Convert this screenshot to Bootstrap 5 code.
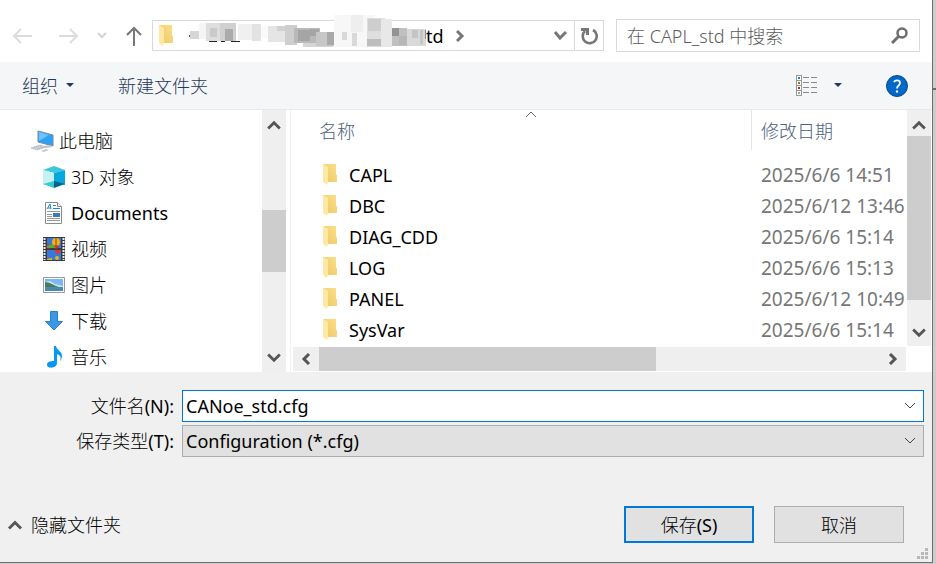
<!DOCTYPE html>
<html lang="zh-CN">
<head>
<meta charset="utf-8">
<meta name="viewport" content="width=device-width, initial-scale=1">
<title>另存为</title>
<link href="https://cdn.jsdelivr.net/npm/bootstrap@5.3.0/dist/css/bootstrap.min.css" rel="stylesheet">
<style>
  body { font-family: "Noto Sans", "Noto Sans CJK SC", sans-serif; font-size: 18px; line-height: 24px; color: #000; background: #cdcdcd; }
  button, input, select { font: inherit; color: inherit; }
  svg { display: block; flex: none; }
  .plain { background: none; border: 0; padding: 0; color: inherit; }
  .cjk { font-weight: 300; }
  .backdrop-page { min-height: 100vh; padding: 0 3px 1px 0; }
  .backdrop-bit { right: 0; width: 3px; height: 90px; top: 0; border-bottom: 2px solid #6b6b6b; }
  .dialog-win { background: #fff; border-right: 1px solid #6e6e6e; border-bottom: 1px solid #6e6e6e; min-width: 0; }
  .nav-strip { padding: 19px 12px 10px 12px; }
  .nav-arrows { width: 140px; gap: 18px; }
  .nav-arrows .back { margin-right: 7px; }
  .address { border: 1px solid #d9d9d9; height: 31px; padding-left: 6px; }
  .address .path-end { margin-left: 253px; margin-right: 12px; }
  .address .hist { margin-left: auto; margin-right: 6px; }
  .reload { width: 29px; border-left: 1px solid #d9d9d9; }
  .search { width: 304px; height: 33px; border: 1px solid #d9d9d9; margin-left: 12px; padding: 0 11px 0 10px; }
  .search input { border: 0; outline: 0; padding: 0; background: none; color: #6d6d6d; min-width: 0; font-weight: 300; }
  .search input::placeholder { color: #5d5d5d; opacity: 1; }
  .redact { left: 33px; top: -8px; z-index: 1; }
  .toolbar { background: #f5f6f7; border-bottom: 1px solid #e8e9ea; height: 48px; padding: 0 24px 0 22px; color: #1e395b; }
  .toolbar .help, .toolbar .new-dir { margin-left: 44px; }
  .browser { height: 262px; }
  .tree { width: 262px; padding-top: 13px; overflow: hidden; flex: none; }
  .tree a { height: 36px; color: #000; text-decoration: none; padding-left: 42px; gap: 5px; }
  .tree a.root { padding-left: 31px; }
  .bar-v { width: 24px; background: #efefef; flex: none; }
  .bar-v.side { padding: 9px 0 8px; }
  .bar-v.files { height: 236px; margin-right: 1px; padding: 9px 0 7px; }
  .bar-v.files .thumb { margin: 5px 0 27px; }
  .thumb { background: #cdcdcd; }
  .thumb-side { height: 62px; margin-top: 79px; }
  .splitter { width: 5px; border-right: 1px solid #f0f0f0; flex: none; }
  .files-pane { min-width: 0; }
  .files-view { height: 237px; min-width: 0; overflow: hidden; }
  .files-table { width: 100%; table-layout: fixed; border-collapse: separate; border-spacing: 0; white-space: nowrap; }
  .files-table th { font-weight: 300; color: #4c607a; height: 40px; padding: 2px 0 0 28px; }
  .files-table th + th { width: 156px; border-left: 1px solid #e5e5e5; padding-left: 9px; }
  .files-table td { height: 31px; padding: 0 0 0 32px; }
  .files-table .spacer td { height: 9px; }
  .files-table td + td { padding-left: 10px; color: #777; font-size: 19px; }
  .sort-mark { left: 234px; top: 1px; }
  .bar-h { height: 24px; background: #efefef; margin: 0 26px 0 2px; }
  .bar-h .end { width: 26px; }
  .thumb-h { width: 60%; }
  .form-zone { background: #f0f0f0; padding: 18px 8px 18px 0; }
  .form-zone label { width: 174px; text-align: right; }
  .field-box { height: 32px; margin-left: 8px; min-width: 0; }
  .field-box input, .field-box select { width: 100%; height: 100%; padding: 0 30px 0 3px; border: 1px solid #0078d7; border-radius: 0; background: #fff; outline: 0; }
  .field-box select { appearance: none; background: #e1e1e1; border-color: #adadad; }
  .field-box svg { right: 8px; top: 12px; pointer-events: none; }
  .type-row { margin-top: 3px; }
  .actions { margin-top: 49px; padding: 0 20px 0 7px; gap: 20px; }
  .act { width: 130px; height: 37px; background: #e1e1e1; border: 1px solid #adadad; padding: 0; }
  .act.main-act { border: 2px solid #0078d7; }
  .grip { right: 3px; bottom: 2px; }
</style>
<script src="https://cdn.jsdelivr.net/npm/bootstrap@5.3.0/dist/js/bootstrap.bundle.min.js"></script>
</head>
<body>
<svg width="0" height="0" class="position-absolute" aria-hidden="true">
  <defs>
    <linearGradient id="fg" x1="0" x2="1" y1="1" y2="0"><stop offset="0" stop-color="#edc766"/><stop offset="1" stop-color="#fbe08a"/></linearGradient>
    <symbol id="folder" viewBox="0 0 14 21"><path d="M0 0h13v11h1v7H4z" fill="url(#fg)"/><path d="M0 0l5 3v15l-1 3-4-3z" fill="#ffe9a2"/></symbol>
    <symbol id="up" viewBox="0 0 12 10"><path d="M1 8l5-5 5 5" fill="none" stroke="#555" stroke-width="2.400"/></symbol>
    <symbol id="down" viewBox="0 0 12 10"><path d="M1 2l5 5 5-5" fill="none" stroke="#555" stroke-width="2.400"/></symbol>
  </defs>
</svg>
<div class="backdrop-page position-relative d-flex">
  <div class="backdrop-bit position-absolute"></div>
  <main class="dialog-win flex-fill d-flex flex-column">
    <div class="nav-strip d-flex align-items-center">
      <div class="nav-arrows d-flex align-items-center">
        <button class="plain back" aria-label="后退"><svg width="21" height="18" viewBox="0 0 21 18" fill="none" stroke="#dcdcdc" stroke-width="2"><path d="M9 2L2 9l7 7M2 9h18"/></svg></button>
        <button class="plain" aria-label="前进"><svg width="21" height="18" viewBox="0 0 21 18" fill="none" stroke="#dcdcdc" stroke-width="2"><path d="M12 2l7 7-7 7M19 9H1"/></svg></button>
        <button class="plain" aria-label="最近位置"><svg width="10" height="8" viewBox="0 0 10 8" fill="none" stroke="#d4d4d4" stroke-width="2"><path d="M1 1l4 4 4-4"/></svg></button>
        <button class="plain" aria-label="上移"><svg width="18" height="22" viewBox="0 0 18 22" fill="none" stroke="#777" stroke-width="2"><path d="M2 10l7-7 7 7M9 3v18"/></svg></button>
      </div>
      <div class="address position-relative flex-fill d-flex align-items-center">
        <svg width="14" height="21"><use href="#folder"/></svg>
        <svg class="redact position-absolute" width="243" height="39" viewBox="0 0 243 39" shape-rendering="crispEdges">
          <path d="M6 19l-4 4 4 4z" fill="#555"/>
          <path d="M23 28h8v1h-8zM35 28h4v1h-4zM45 28h9v1h-9z" fill="#222"/>
          <path d="M4 18h9v8H4z" fill="#d6d6d6"/><path d="M13 10h8v16h-8z" fill="#f5f5f5"/>
          <path d="M20 10h14v18H20z" fill="#dedede"/><path d="M34 10h16v18H34z" fill="#d0d0d0"/><path d="M39 16h8v12h-8z" fill="#ababab"/><path d="M24 15h7v9h-7z" fill="#cacaca"/>
          <path d="M52 11h20v16H52z" fill="#f0f0f0"/><path d="M66 11h9v17h-9z" fill="#e2e2e2"/><path d="M75 12h7v14h-7z" fill="#fafafa"/>
          <path d="M82 13h20v16H82z" fill="#e5e5e5"/><path d="M91 13h11v5H91z" fill="#d1d1d1"/><path d="M99 12h12v20H99z" fill="#cecece"/>
          <path d="M108 15h26v15h-26z" fill="#b9b9b9"/><path d="M112 17h12v11h-12zM124 16h9v7h-9z" fill="#a5a5a5"/><path d="M117 30h30v4h-30z" fill="#d5d5d5"/>
          <path d="M130 19h19v14h-19z" fill="#c7c7c7"/><path d="M141 19h8v13h-8z" fill="#a9a9a9"/>
          <path d="M148 2h41v32h-41z" fill="#f7f7f7"/><path d="M156 19h5v8h-5zM166 20h5v13h-5z" fill="#d9d9d9"/>
          <path d="M165 2h12v17h-12z" fill="#eee"/><path d="M181 5h18v29h-18z" fill="#dedede"/><path d="M182 6h13v12h-13z" fill="#cecece"/><path d="M181 26h15v7h-15z" fill="#bdbdbd"/>
          <path d="M195 6h11v28h-11z" fill="#e8e8e8"/><path d="M206 15h15v18h-15z" fill="#c0c0c0"/><path d="M206 15h7v8h-7z" fill="#939393"/><path d="M213 23h11v9h-11z" fill="#b7b7b7"/>
          <path d="M221 16h19v17h-19z" fill="#d9d9d9"/><path d="M226 17h6v8h-6zM234 17h3v14h-3z" fill="#c5c5c5"/><path d="M239 17h1v9h-1z" fill="#888"/>
        </svg>
        <span class="path-end">td</span>
        <svg width="9" height="12" viewBox="0 0 9 12"><path d="M1 1l5 5-5 5" fill="none" stroke="#777" stroke-width="3"/></svg>
        <button class="plain hist" aria-label="历史记录"><svg width="15" height="11" viewBox="0 0 15 11"><path d="M2 2l5 6 6-6" fill="none" stroke="#777" stroke-width="3"/></svg></button>
        <button class="plain reload h-100 d-flex align-items-center justify-content-center" aria-label="刷新"><svg width="18" height="18" viewBox="0 0 18 18"><path d="M13 3a7 7 0 1 1-8 1" fill="none" stroke="#777" stroke-width="2.600"/><path d="M1 1h8v7H6V4H1z" fill="#777"/></svg></button>
      </div>
      <div class="search d-flex align-items-center">
        <input class="flex-fill" type="search" aria-label="搜索" placeholder="在 CAPL_std 中搜索">
        <svg width="17" height="17" viewBox="0 0 17 17" fill="none" stroke="#6d6d6d"><circle cx="11" cy="6" r="4.500" stroke-width="2.500"/><path d="M8 9l-7 7" stroke-width="3"/></svg>
      </div>
    </div>

    <div class="toolbar cjk d-flex align-items-center">
      <button class="plain d-flex align-items-center gap-2">组织<svg width="8" height="5" viewBox="0 0 8 5"><path d="M0 0h8L4 4z" fill="#1e395b"/></svg></button>
      <button class="plain new-dir">新建文件夹</button>
      <button class="plain ms-auto d-flex align-items-center gap-3" aria-label="更改视图">
        <svg width="22" height="21" viewBox="0 0 22 21" shape-rendering="crispEdges"><path d="M.5.500h5v20h-5zM.5 5.500h5M.5 10.500h5M.5 15.500h5" fill="#fff" stroke="#999"/><path d="M7 2.500h6M15 2.500h6M7 7.500h6M15 7.500h6M7 12.500h6M15 12.500h6M7 17.500h6M15 17.500h6" stroke="#8a8a8a"/><path d="M2 2h2v2H2z" fill="#2b7cd3"/><path d="M2 7h2v2H2z" fill="#8c7a20"/><path d="M2 12h2v2H2z" fill="#d02010"/><path d="M2 17h2v2H2z" fill="#9a9"/></svg>
        <svg width="8" height="5" viewBox="0 0 8 5"><path d="M0 0h8L4 4z" fill="#1e395b"/></svg>
      </button>
      <button class="plain help" aria-label="帮助"><svg width="22" height="22" viewBox="0 0 22 22"><circle cx="11" cy="11" r="10.500" fill="#0068c6" stroke="#0a4a8c"/><path d="M8 7c1-2 6-2.500 6 1 0 2.500-3 2.500-3 5.500" fill="none" stroke="#fff" stroke-width="1.800"/><circle cx="11" cy="16.500" r="1.200" fill="#fff"/></svg></button>
    </div>

    <div class="browser d-flex">
      <nav class="tree cjk">
        <a href="#" class="root d-flex align-items-center"><svg width="23" height="22" viewBox="0 0 23 22"><path d="M7 1l15 4v11L7 12z" fill="#2da2f5" stroke="#7b8b99"/><path d="M8 2l10 3-10 6z" fill="#6cc2ff"/><path d="M13 16l7-1 1 2-7 1z" fill="#bcc4ca"/><path d="M0 18l9-3 6 2-9 3z" fill="#d8dde2" stroke="#a8afb8" stroke-width=".6"/><path d="M3 18l8-2M6 19l7-2" stroke="#9aa3ad" stroke-dasharray="1 1"/><path d="M10 21l5-2 3 1-5 2z" fill="#c4cad0"/></svg>此电脑</a>
        <a href="#" class="d-flex align-items-center"><svg width="24" height="22" viewBox="0 0 24 22"><path d="M1 4l11-4 11 4-11 3z" fill="#3ec6dc"/><path d="M1 4l11 3v9L1 19z" fill="#c6f1f3"/><path d="M23 4L12 7v9l11 3z" fill="#06a7dd"/><path d="M1 18l11-3v7z" fill="#38c9d2"/><path d="M23 18l-11-3v7z" fill="#00668a"/></svg>3D 对象</a>
        <a href="#" class="d-flex align-items-center fw-normal"><svg width="24" height="22" viewBox="0 0 24 22"><path d="M3.500.500h12l4 4v17h-16z" fill="#fff" stroke="#8b8b8b"/><path d="M15.500.500v4h4" fill="#eee" stroke="#8b8b8b"/><path d="M5 7l3-5 1 5M6 6h3M11 3.500h3M11 6.500h7" fill="none" stroke="#1688cc"/><path d="M5 9.500h13M5 12.500h5M5 14.500h5M5 16.500h13M5 18.500h13" stroke="#999"/><path d="M11 11h7v4h-7z" fill="#3a7cb4"/></svg>Documents</a>
        <a href="#" class="d-flex align-items-center"><svg width="24" height="24" viewBox="0 0 24 24"><path d="M1 0h22v24H1z" fill="#3b3b3b"/><path d="M2.500 1v22M21.500 1v22" stroke="#eee" stroke-width="2" stroke-dasharray="2 1"/><path d="M5 1h14v10H5zM5 13h14v10H5z" fill="#3979dc"/><circle cx="14" cy="5" r="4" fill="#e8b41c"/><path d="M14 1v8M5 8h4v3H5zM12 9h4v2h-4z" fill="#d33f22" stroke="#c62e20"/><path d="M5 9l5-2 4 4H5z" fill="#59a943"/><path d="M12 13h7l-3 5z" fill="#d63b2c"/><circle cx="15" cy="21" r="2" fill="#e8b41c"/><path d="M5 22l5-1v2H5z" fill="#e8b41c"/></svg>视频</a>
        <a href="#" class="d-flex align-items-center"><svg width="24" height="16" viewBox="0 0 24 16"><path d="M1.500.500h21v15h-21z" fill="#fff" stroke="#999"/><path d="M3 2h18v12H3z" fill="#79b9f2"/><path d="M3 5l5-1 5 3 8 2v5H3z" fill="#c8e3f4"/><path d="M3 5c4 0 8 3 14 5H3z" fill="#467d5d"/><path d="M3 10h18v4H3z" fill="#4b89ae"/></svg>图片</a>
        <a href="#" class="d-flex align-items-center"><svg width="24" height="22" viewBox="0 0 24 22"><path d="M8.500 1.500h7v10h5L12 20l-8.500-8.500h5z" fill="#3b98e7" stroke="#2b82cb"/></svg>下载</a>
        <a href="#" class="d-flex align-items-center"><svg width="24" height="24" viewBox="0 0 24 24"><path d="M12 1h2c1 5 9 6 5 14l-1 1c2-5-1-6-3-7v9c0 6-11 6-10 1 1-3 5-3 7-3z" fill="#0798f2"/></svg>音乐</a>
      </nav>
      <div class="bar-v side d-flex flex-column">
        <svg class="mx-auto" width="14" height="12"><use href="#up"/></svg>
        <div class="thumb thumb-side"></div>
        <svg class="mx-auto mt-auto" width="14" height="12"><use href="#down"/></svg>
      </div>
      <div class="splitter"></div>
      <section class="files-pane flex-fill d-flex flex-column">
        <div class="d-flex">
          <div class="files-view flex-fill position-relative">
            <svg class="sort-mark position-absolute" width="12" height="7" viewBox="0 0 12 7"><path d="M1 6l5-5 5 5" fill="none" stroke="#666"/></svg>
            <table class="files-table">
              <thead><tr><th scope="col">名称</th><th scope="col">修改日期</th></tr></thead>
              <tbody>
                <tr class="spacer"><td colspan="2"></td></tr>
                <tr><td><div class="d-flex align-items-center gap-2"><svg class="me-1" width="14" height="21"><use href="#folder"/></svg>CAPL</div></td><td>2025/6/6 14:51</td></tr>
                <tr><td><div class="d-flex align-items-center gap-2"><svg class="me-1" width="14" height="21"><use href="#folder"/></svg>DBC</div></td><td>2025/6/12 13:46</td></tr>
                <tr><td><div class="d-flex align-items-center gap-2"><svg class="me-1" width="14" height="21"><use href="#folder"/></svg>DIAG_CDD</div></td><td>2025/6/6 15:14</td></tr>
                <tr><td><div class="d-flex align-items-center gap-2"><svg class="me-1" width="14" height="21"><use href="#folder"/></svg>LOG</div></td><td>2025/6/6 15:13</td></tr>
                <tr><td><div class="d-flex align-items-center gap-2"><svg class="me-1" width="14" height="21"><use href="#folder"/></svg>PANEL</div></td><td>2025/6/12 10:49</td></tr>
                <tr><td><div class="d-flex align-items-center gap-2"><svg class="me-1" width="14" height="21"><use href="#folder"/></svg>SysVar</div></td><td>2025/6/6 15:14</td></tr>
              </tbody>
            </table>
          </div>
          <div class="bar-v files d-flex flex-column">
            <svg class="mx-auto" width="14" height="12"><use href="#up"/></svg>
            <div class="thumb flex-fill"></div>
            <svg class="mx-auto" width="14" height="12"><use href="#down"/></svg>
          </div>
        </div>
        <div class="bar-h d-flex align-items-center">
          <div class="end"><svg class="mx-auto" width="10" height="12" viewBox="0 0 10 12"><path d="M8 1L3 6l5 5" fill="none" stroke="#555" stroke-width="3"/></svg></div>
          <div class="flex-fill h-100"><div class="thumb thumb-h h-100"></div></div>
          <div class="end"><svg class="mx-auto" width="10" height="12" viewBox="0 0 10 12"><path d="M2 1l5 5-5 5" fill="none" stroke="#555" stroke-width="3"/></svg></div>
        </div>
      </section>
    </div>

    <div class="form-zone flex-fill position-relative">
      <div class="d-flex align-items-center">
        <label class="cjk" for="fname">文件名<span class="fw-normal">(N):</span></label>
        <div class="field-box flex-fill position-relative"><input id="fname" type="text" value="CANoe_std.cfg"><svg class="position-absolute" width="12" height="8" viewBox="0 0 12 8"><path d="M1 1l5 5 5-5" fill="none" stroke="#444"/></svg></div>
      </div>
      <div class="d-flex align-items-center type-row">
        <label class="cjk" for="ftype">保存类型<span class="fw-normal">(T):</span></label>
        <div class="field-box flex-fill position-relative"><select id="ftype"><option>Configuration (*.cfg)</option></select><svg class="position-absolute" width="12" height="8" viewBox="0 0 12 8"><path d="M1 1l5 5 5-5" fill="none" stroke="#444"/></svg></div>
      </div>
      <div class="actions cjk d-flex align-items-center">
        <button class="plain me-auto d-flex align-items-center gap-2"><svg width="16" height="12"><use href="#up"/></svg>隐藏文件夹</button>
        <button class="act main-act">保存<span class="fw-normal">(S)</span></button>
        <button class="act">取消</button>
      </div>
      <svg class="grip position-absolute" width="12" height="12" viewBox="0 0 12 12" fill="#b8b8b8"><path d="M8 0h3v3H8zM4 4h3v3H4zM8 4h3v3H8zM0 8h3v3H0zM4 8h3v3H4zM8 8h3v3H8z"/></svg>
    </div>
  </main>
</div>
</body>
</html>
